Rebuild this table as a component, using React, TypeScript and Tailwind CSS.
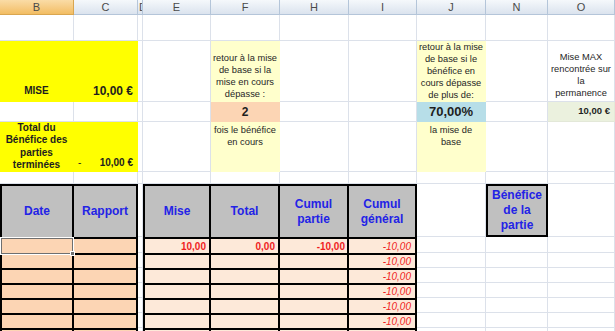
import type { ReactNode } from 'react';
import { twMerge } from 'tailwind-merge';

const COLS = ['B', 'C', 'D', 'E', 'F', 'H', 'I', 'J', 'N', 'O'];

const YELLOW = 'bg-[#ffff00] border-transparent';
const CREAM = 'bg-[#ffffcc] border-transparent';
const NOTE = 'justify-center text-center text-[9.3px] leading-[12px] text-[#262626]';
const HEAD =
  'items-center justify-center border-t-2 border-r-2 border-b-0 border-black bg-[#c0c0c0] text-center text-[12px] font-bold leading-[15px] text-[#2323e6]';
const DARK = 'border-t-2 border-r-2 border-b-0 border-black bg-[#fcd5b4]';
const LIGHT =
  'items-center justify-end border-t-2 border-r-2 border-b-0 border-black bg-[#fde9d9] pr-[3px] text-[10px] text-[#f01e1e]';

function Cell({ className, children }: { className?: string; children?: ReactNode }) {
  return (
    <div className={twMerge('flex min-w-0 overflow-hidden border-r border-b border-[#dce1ea] bg-white', className)}>
      {children}
    </div>
  );
}

function Lines({ lines }: { lines: string[] }) {
  return (
    <div>
      {lines.map((l) => (
        <div key={l} className="whitespace-nowrap">
          {l}
        </div>
      ))}
    </div>
  );
}

function Blank({ from, to, row }: { from: number; to: number; row: string }) {
  return (
    <>
      {COLS.slice(from, to).map((c) => (
        <Cell key={row + c} />
      ))}
    </>
  );
}

function DataRow({ row, first, general }: { row: number; first?: boolean; general?: boolean }) {
  return (
    <>
      <Cell className={twMerge(DARK, 'relative overflow-visible border-l-2')}>
        {first && (
          <div className="absolute -top-[1px] -left-[1px] -right-[1px] -bottom-[1px] z-10 border border-[#6f6f6f] shadow-[0_0_0_1px_#ffffff]">
            <div className="absolute -right-[3px] -bottom-[3px] h-[5px] w-[5px] border border-white bg-[#6f6f6f]" />
          </div>
        )}
      </Cell>
      <Cell className={DARK} />
      <Cell />
      <Cell className={twMerge(LIGHT, 'border-l-2 font-bold')}>{first && '10,00'}</Cell>
      <Cell className={twMerge(LIGHT, 'font-bold')}>{first && '0,00'}</Cell>
      <Cell className={twMerge(LIGHT, 'pr-[2px] font-bold')}>{first && '-10,00'}</Cell>
      <Cell className={twMerge(LIGHT, 'pr-[4px] italic')}>{general && '-10,00'}</Cell>
      <Blank from={7} to={10} row={'d' + row} />
    </>
  );
}

export default function App() {
  return (
    <div className="grid h-[331px] w-[615px] grid-cols-[74px_64px_5px_68px_69px_69px_68px_69px_62px_67px] grid-rows-[15px_26px_61px_20px_50px_12px_53px_16px_15px_15px_15px_15px_15px_15px] overflow-hidden bg-white font-['Liberation_Sans',Arial,sans-serif] text-[#1e1e1e]">
      {/* column letters */}
      {COLS.map((c) => (
        <div
          key={'h' + c}
          className={twMerge(
            'flex items-center justify-center overflow-hidden border-r border-b border-[#b4c5d9] bg-linear-to-b from-[#f5f8fb] to-[#dbe3ee] text-[11px] text-[#4a4a4a]',
            c === 'B' && 'border-[#d9a650] from-[#fadca6] to-[#f2bd62]',
            c === 'D' && 'justify-start pl-[1px]'
          )}
        >
          {c}
        </div>
      ))}

      {/* row 1 */}
      <Blank from={0} to={10} row="r1" />

      {/* row 2 */}
      <Cell className={twMerge(YELLOW, 'items-end justify-center pb-[3px] text-[10px] font-bold')}>MISE</Cell>
      <Cell className={twMerge(YELLOW, 'items-end justify-end pr-[4px] pb-[1px] text-[12px] font-bold')}>10,00 €</Cell>
      <Blank from={2} to={4} row="r2" />
      <Cell className={twMerge(CREAM, NOTE, 'items-end pb-[1px]')}>
        <Lines lines={['retour à la mise', 'de base si la', 'mise en cours', 'dépasse :']} />
      </Cell>
      <Blank from={5} to={7} row="r2" />
      <Cell className={twMerge(CREAM, NOTE, 'items-end')}>
        <Lines lines={['retour à la mise', 'de base si le', 'bénéfice en', 'cours dépasse', 'de plus de:']} />
      </Cell>
      <Cell />
      <Cell className={twMerge(NOTE, 'items-end pb-[2px]')}>
        <Lines lines={['Mise MAX', 'rencontrée sur', 'la', 'permanence']} />
      </Cell>

      {/* row 3 */}
      <Blank from={0} to={4} row="r3" />
      <Cell className="items-center justify-center border-transparent bg-[#fcd5b4] text-[12px] font-bold">2</Cell>
      <Blank from={5} to={7} row="r3" />
      <Cell className="items-center justify-center border-transparent bg-[#b7dee8] text-[13px] font-bold">70,00%</Cell>
      <Cell />
      <Cell className="items-center justify-end border-[#e3e8d8] bg-[#ebf1de] pr-[4px] text-[9.5px] font-bold">10,00 €</Cell>

      {/* row 4 */}
      <Cell className={twMerge(YELLOW, 'items-center justify-center text-center text-[10px] font-bold leading-[12.3px]')}>
        <Lines lines={['Total du', 'Bénéfice des', 'parties', 'terminées']} />
      </Cell>
      <Cell className={twMerge(YELLOW, 'items-end justify-between pr-[4px] pl-[4px] pb-[1px] text-[10px] font-bold')}>
        <span className="font-normal">-</span>
        <span>10,00 €</span>
      </Cell>
      <Blank from={2} to={4} row="r4" />
      <Cell className={twMerge(CREAM, NOTE, 'items-start pt-[2px]')}>
        <Lines lines={['fois le bénéfice', 'en cours']} />
      </Cell>
      <Blank from={5} to={7} row="r4" />
      <Cell className={twMerge(CREAM, NOTE, 'items-start pt-[2px]')}>
        <Lines lines={['la mise de', 'base']} />
      </Cell>
      <Blank from={8} to={10} row="r4" />

      {/* row 5 */}
      <Blank from={0} to={10} row="r5" />

      {/* table header */}
      <Cell className={twMerge(HEAD, 'border-l-2')}>Date</Cell>
      <Cell className={HEAD}>Rapport</Cell>
      <Cell />
      <Cell className={twMerge(HEAD, 'border-l-2')}>Mise</Cell>
      <Cell className={HEAD}>Total</Cell>
      <Cell className={HEAD}>
        <Lines lines={['Cumul', 'partie']} />
      </Cell>
      <Cell className={HEAD}>
        <Lines lines={['Cumul', 'général']} />
      </Cell>
      <Cell />
      <Cell className={twMerge(HEAD, 'border-2 border-black')}>
        <Lines lines={['Bénéfice', 'de la', 'partie']} />
      </Cell>
      <Cell />

      {/* data rows */}
      <DataRow row={1} first general />
      <DataRow row={2} general />
      <DataRow row={3} general />
      <DataRow row={4} general />
      <DataRow row={5} general />
      <DataRow row={6} general />
      <DataRow row={7} />
    </div>
  );
}
